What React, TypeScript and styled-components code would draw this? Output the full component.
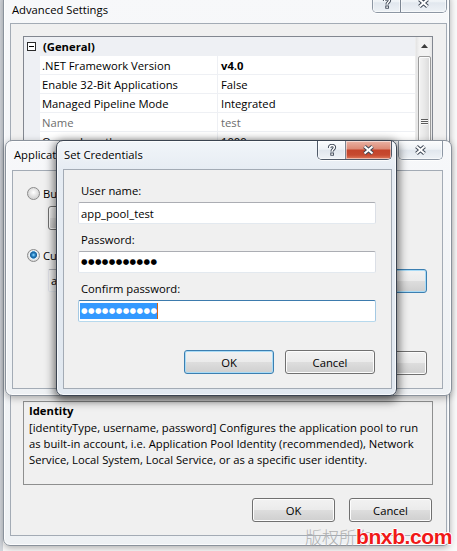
import styled, { createGlobalStyle } from "styled-components";

const UI = `"Open Sans", "Noto Sans", "Liberation Sans", sans-serif`;

const GlobalStyle = createGlobalStyle`
  html, body { margin: 0; padding: 0; background: #ffffff; }
  body { font-family: ${UI}; font-size: 11.25px; color: #000; }
  *, *::before, *::after { box-sizing: border-box; }
`;

type Placement = { $x: number; $y: number; $w: number; $h: number; $z: number };

const Desktop = styled.div`
  position: relative;
  width: 457px;
  height: 551px;
  overflow: hidden;
  background: linear-gradient(90deg, #d3d7dd 0, #d3d7dd 3px, #fafafa 3px);
`;

/* windows sit on the desktop at their own coordinates */
const Window = styled.div<Placement & { $active?: boolean; $pad: string }>`
  position: absolute;
  left: ${(p) => p.$x}px;
  top: ${(p) => p.$y}px;
  width: ${(p) => p.$w}px;
  height: ${(p) => p.$h}px;
  z-index: ${(p) => p.$z};
  display: flex;
  flex-direction: column;
  padding: ${(p) => p.$pad};
  border-radius: 7px;
  border: 1px solid ${(p) => (p.$active ? "#3a4350" : "#8a929c")};
  background: ${(p) =>
    p.$active
      ? "linear-gradient(180deg, #f1f5f9 0%, #e6ecf3 30px, #e1e8f0 100%)"
      : "linear-gradient(180deg, #f7f8fa 0%, #eef1f4 100%)"};
  box-shadow: ${(p) =>
    p.$active
      ? "inset 0 0 0 1px rgba(255,255,255,0.7), 0 3px 10px 2px rgba(0,0,0,0.55)"
      : "inset 0 0 0 1px rgba(255,255,255,0.8), 0 2px 7px rgba(0,0,0,0.3)"};
`;

const TitleBar = styled.div<{ $h: number; $left: number; $top: number }>`
  flex-shrink: 0;
  height: ${(p) => p.$h}px;
  display: flex;
  align-items: flex-start;
  padding-left: ${(p) => p.$left}px;

  & > span {
    padding-top: ${(p) => p.$top}px;
    line-height: 16px;
    color: #000;
    white-space: nowrap;
    text-shadow: 0 0 6px #fff, 0 0 3px #fff;
  }
`;

const CaptionGroup = styled.div<{ $h: number; $inactive?: boolean }>`
  display: flex;
  height: ${(p) => p.$h}px;
  margin-left: auto;
  border: 1px solid ${(p) => (p.$inactive ? "#8d97a4" : "#4f5968")};
  border-top: none;
  border-radius: 0 0 5px 5px;
  overflow: hidden;
  box-shadow: 0 1px 0 rgba(255, 255, 255, 0.8);
`;

const CaptionButton = styled.div<{ $w: number; $close?: boolean }>`
  width: ${(p) => p.$w}px;
  display: flex;
  align-items: center;
  justify-content: center;
  background: ${(p) =>
    p.$close
      ? "linear-gradient(180deg, #eab3a5 0%, #dd8c78 42%, #c4442b 52%, #c64a30 78%, #df7a5d 100%)"
      : "linear-gradient(180deg, #fbfcfd 0%, #eef2f6 45%, #e1e7ee 52%, #eef2f6 100%)"};
  box-shadow: inset 0 0 0 1px rgba(255, 255, 255, 0.5);

  & + & {
    border-left: 1px solid #7b8592;
  }
`;

const Client = styled.div<{ $pad: string }>`
  flex: 1;
  display: flex;
  flex-direction: column;
  padding: ${(p) => p.$pad};
  background: #f0f0f0;
  border: 1px solid #a3abb5;
  overflow: hidden;
`;

function CloseGlyph() {
  const d = "M2.5 1.5 L10.5 8.5 M10.5 1.5 L2.5 8.5";
  return (
    <svg width="13" height="10" viewBox="0 0 13 10">
      <path d={d} stroke="#3f4856" strokeWidth="4" />
      <path d={d} stroke="#ffffff" strokeWidth="2" />
    </svg>
  );
}

function HelpGlyph() {
  const d = "M2.6 4 C2.6 2.3 3.7 1.6 5 1.6 C6.5 1.6 7.4 2.5 7.4 3.6 C7.4 5.1 5.1 5.4 5.1 7.4";
  return (
    <svg width="10" height="12" viewBox="0 0 10 12">
      <path d={d} fill="none" stroke="#3f4856" strokeWidth="3.4" />
      <rect x="3.3" y="8.5" width="3.6" height="3.2" fill="#3f4856" />
      <path d={d} fill="none" stroke="#ffffff" strokeWidth="1.5" />
      <rect x="4.3" y="9.4" width="1.6" height="1.5" fill="#ffffff" />
    </svg>
  );
}

function Caption({ help, inactive, h }: { help?: boolean; inactive?: boolean; h: number }) {
  return (
    <CaptionGroup $h={h} $inactive={inactive}>
      {help && (
        <CaptionButton $w={27}>
          <HelpGlyph />
        </CaptionButton>
      )}
      <CaptionButton $w={help ? 46 : 43} $close={!inactive}>
        <CloseGlyph />
      </CaptionButton>
    </CaptionGroup>
  );
}

/* ---------- buttons & inputs ---------- */

const Button = styled.div<{ $w: number; $default?: boolean }>`
  width: ${(p) => p.$w}px;
  height: 24px;
  display: flex;
  align-items: center;
  justify-content: center;
  border: 1px solid ${(p) => (p.$default ? "#3c7fb1" : "#707070")};
  border-radius: 3px;
  background: linear-gradient(180deg, #f2f2f2 0%, #ebebeb 48%, #dddddd 52%, #cfcfcf 100%);
  box-shadow: inset 0 0 0 1px ${(p) => (p.$default ? "#a9dbf6" : "#fcfcfc")};
  color: #000;
`;

const ButtonRow = styled.div<{ $top: number; $gap: number; $right: number }>`
  display: flex;
  justify-content: flex-end;
  gap: ${(p) => p.$gap}px;
  margin-top: ${(p) => p.$top}px;
  margin-right: ${(p) => p.$right}px;
`;

const TextBox = styled.div<{ $focused?: boolean; $disabled?: boolean }>`
  height: 22px;
  display: flex;
  align-items: center;
  padding-left: 2px;
  background: ${(p) => (p.$disabled ? "#f4f4f4" : "#ffffff")};
  border: 1px solid;
  border-color: ${(p) =>
    p.$focused ? "#3d7bad #a4c9e3 #b7d9ed #a4c9e3" : "#abadb3 #dbdfe6 #e3e9ef #e2e3ea"};
  border-radius: 2px;
  white-space: nowrap;
  overflow: hidden;
`;

const Dots = styled.span`
  font-family: "DejaVu Sans", sans-serif;
  font-size: 7.5px;
  line-height: 16px;
  letter-spacing: 0.4px;
`;

const Selection = styled(Dots)`
  display: inline-block;
  height: 16px;
  margin-left: -1px;
  padding-left: 1px;
  background: #3399ff;
  color: #ffffff;
`;

const Caret = styled.span`
  display: inline-block;
  width: 1px;
  height: 16px;
  background: #d8640c;
`;

/* ---------- property grid ---------- */

const LINE = "#eef0f4";

const Grid = styled.div`
  height: 354px;
  flex-shrink: 0;
  display: flex;
  border: 1px solid #828790;
  background: #ffffff;
`;

const Rows = styled.div`
  flex: 1;
  display: flex;
  flex-direction: column;
`;

const CategoryRow = styled.div`
  height: 19px;
  display: flex;
  align-items: center;
  background: ${LINE};
  font-weight: 700;
`;

const Expander = styled.span`
  width: 9px;
  height: 9px;
  margin: 0 7px 0 3px;
  border: 1px solid #2b2b2b;
  background: #fff;
  display: flex;
  align-items: center;
  justify-content: center;

  &::after {
    content: "";
    width: 5px;
    height: 1px;
    background: #000;
  }
`;

const PropRow = styled.div`
  height: 19px;
  display: flex;
  border-bottom: 1px solid ${LINE};
`;

const Gutter = styled.span`
  width: 16px;
  background: ${LINE};
`;

const Cell = styled.span<{ $bold?: boolean; $muted?: boolean; $name?: boolean }>`
  display: flex;
  align-items: center;
  white-space: nowrap;
  width: ${(p) => (p.$name ? "178px" : "auto")};
  flex: ${(p) => (p.$name ? "none" : 1)};
  padding-left: ${(p) => (p.$name ? 2 : 3)}px;
  border-right: ${(p) => (p.$name ? `1px solid ${LINE}` : "none")};
  font-weight: ${(p) => (p.$bold ? 700 : 400)};
  color: ${(p) => (p.$muted ? "#6d6d6d" : "#000")};
`;

const ScrollBar = styled.div`
  width: 17px;
  display: flex;
  flex-direction: column;
  align-items: center;
  background: linear-gradient(90deg, #e3e3e3, #f2f2f2 20%, #f2f2f2 80%, #e6e6e6);
  border-left: 1px solid #ececec;
`;

const ArrowButton = styled.div`
  height: 17px;
  display: flex;
  align-items: center;
  justify-content: center;
`;

const Thumb = styled.div`
  width: 13px;
  height: 130px;
  margin-top: 2px;
  border: 1px solid #9a9a9a;
  border-radius: 2px;
  background: linear-gradient(90deg, #f3f3f3, #e8e8e8 50%, #d9d9d9);
  box-shadow: inset 0 0 0 1px #fbfbfb;
  display: flex;
  flex-direction: column;
  align-items: center;
  justify-content: center;
  gap: 1px;

  & > i {
    display: block;
    width: 7px;
    height: 1px;
    background: #5c5c5c;
    box-shadow: 0 1px 0 #f7f7f7;
  }
`;

const Description = styled.div`
  height: 84px;
  margin-top: 11px;
  flex-shrink: 0;
  padding: 1px 5px;
  border: 1px solid #8e8f8f;
  line-height: 16px;

  & > b {
    display: block;
    margin-bottom: 1px;
  }
  & > span {
    display: block;
    white-space: nowrap;
  }
`;

/* ---------- identity dialog ---------- */

const RadioRow = styled.div<{ $top: number }>`
  display: flex;
  align-items: center;
  gap: 3px;
  height: 13px;
  margin-top: ${(p) => p.$top}px;
  white-space: nowrap;
`;

const Radio = styled.span<{ $checked?: boolean }>`
  width: 13px;
  height: 13px;
  flex-shrink: 0;
  border-radius: 50%;
  border: 1px solid #8a8a8a;
  background: ${(p) =>
    p.$checked
      ? "radial-gradient(circle at 50% 45%, #9fe0ff 0, #2f8fd0 1.5px, #1b5d96 3px, #5aa9dd 3.6px, #eef3f6 4px, #dcdcdc 5.5px)"
      : "radial-gradient(circle at 50% 40%, #ffffff 0, #f0f0f0 2px, #d7d7d7 5.5px)"};
`;

const Combo = styled(Button)`
  width: 200px;
  height: 24px;
  margin: 6px 0 0 21px;
`;

const AccountRow = styled.div`
  display: flex;
  gap: 8px;
  margin: 7px 0 0 21px;

  & > ${TextBox} {
    flex: 1;
    height: 23px;
  }
`;

/* ---------- credentials dialog ---------- */

const Label = styled.div<{ $top: number }>`
  margin: ${(p) => p.$top}px 0 3px 3px;
  line-height: 16px;
`;

const Watermark = styled.div`
  position: absolute;
  left: 305px;
  top: 524px;
  z-index: 10;
  display: flex;
  align-items: center;
  white-space: nowrap;
`;

const WatermarkCn = styled.span`
  font-family: "Noto Sans CJK SC", sans-serif;
  font-size: 17px;
  font-weight: 300;
  color: #b0b0b0;
`;

const WatermarkUrl = styled.span`
  margin-left: -17px;
  font-family: "Liberation Sans", Arial, sans-serif;
  font-weight: 700;
  font-size: 21px;
  letter-spacing: -0.4px;
  color: #f01818;
  text-shadow: 1px 0 #fff, -1px 0 #fff, 0 1px #fff, 0 -1px #fff;
`;

const props: [string, string, { bold?: boolean; muted?: boolean }?][] = [
  [".NET Framework Version", "v4.0", { bold: true }],
  ["Enable 32-Bit Applications", "False"],
  ["Managed Pipeline Mode", "Integrated"],
  ["Name", "test", { muted: true }],
  ["Queue Length", "1000"],
  ["Start Automatically", "True"],
];

export default function App() {
  return (
    <Desktop>
      <GlobalStyle />

      <Window $x={3} $y={-8} $w={447} $h={554} $z={1} $pad="0 2px 9px 6px">
        <TitleBar $h={30} $left={2} $top={9}>
          <span>Advanced Settings</span>
          <Caption help inactive h={20} />
        </TitleBar>
        <Client $pad="12px 13px 0 12px">
          <Grid>
            <Rows>
              <CategoryRow>
                <Expander />
                (General)
              </CategoryRow>
              {props.map(([name, value, o]) => (
                <PropRow key={name}>
                  <Gutter />
                  <Cell $name $muted={o?.muted}>
                    {name}
                  </Cell>
                  <Cell $bold={o?.bold} $muted={o?.muted}>
                    {value}
                  </Cell>
                </PropRow>
              ))}
            </Rows>
            <ScrollBar>
              <ArrowButton>
                <svg width="7" height="4" viewBox="0 0 7 4">
                  <path d="M0 4 L3.5 0 L7 4 Z" fill="#3c3c3c" />
                </svg>
              </ArrowButton>
              <Thumb>
                <i />
                <i />
                <i />
              </Thumb>
            </ScrollBar>
          </Grid>
          <Description>
            <b>Identity</b>
            <span>[identityType, username, password] Configures the application pool to run</span>
            <span>as built-in account, i.e. Application Pool Identity (recommended), Network</span>
            <span>Service, Local System, Local Service, or as a specific user identity.</span>
          </Description>
          <ButtonRow $top={13} $gap={14} $right={1}>
            <Button $w={83}>OK</Button>
            <Button $w={83}>Cancel</Button>
          </ButtonRow>
        </Client>
      </Window>

      <Window $x={5} $y={140} $w={447} $h={256} $z={2} $pad="0 8px 6px 6px">
        <TitleBar $h={29} $left={2} $top={6}>
          <span>Application Pool Identity</span>
          <Caption inactive h={19} />
        </TitleBar>
        <Client $pad="0 15px 0 14px">
          <RadioRow $top={16}>
            <Radio />
            Built-in account:
          </RadioRow>
          <Combo $w={200}>ApplicationPoolIdentity</Combo>
          <RadioRow $top={19}>
            <Radio $checked />
            Custom account:
          </RadioRow>
          <AccountRow>
            <TextBox $disabled>app_pool_test</TextBox>
            <Button $w={110} $default>
              Set...
            </Button>
          </AccountRow>
          <ButtonRow $top={58} $gap={8} $right={0}>
            <Button $w={95}>OK</Button>
            <Button $w={95}>Cancel</Button>
          </ButtonRow>
        </Client>
      </Window>

      <Window $x={56} $y={140} $w={341} $h={256} $z={3} $active $pad="0 4px 6px 6px">
        <TitleBar $h={28} $left={1} $top={6}>
          <span>Set Credentials</span>
          <Caption help h={19} />
        </TitleBar>
        <Client $pad="0 15px 0 14px">
          <Label $top={13}>User name:</Label>
          <TextBox>app_pool_test</TextBox>
          <Label $top={8}>Password:</Label>
          <TextBox>
            <Dots>●●●●●●●●●●●</Dots>
          </TextBox>
          <Label $top={8}>Confirm password:</Label>
          <TextBox $focused>
            <Selection>●●●●●●●●●●●</Selection>
            <Caret />
          </TextBox>
          <ButtonRow $top={28} $gap={11} $right={1}>
            <Button $w={90} $default>
              OK
            </Button>
            <Button $w={90}>Cancel</Button>
          </ButtonRow>
        </Client>
      </Window>

      <Watermark>
        <WatermarkCn>版权所有</WatermarkCn>
        <WatermarkUrl>bnxb.com</WatermarkUrl>
      </Watermark>
    </Desktop>
  );
}
